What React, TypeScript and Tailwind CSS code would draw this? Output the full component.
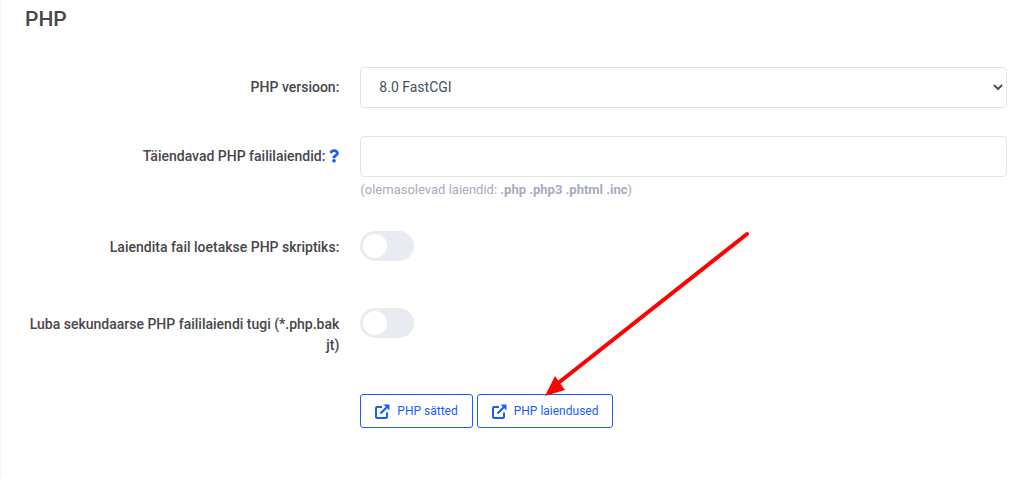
import { useId } from 'react';
import type { ReactNode } from 'react';
import { FaQuestion } from 'react-icons/fa';

function Row({ label, htmlFor, hint, children }: { label?: string; htmlFor?: string; hint?: ReactNode; children: ReactNode }) {
  return (
    <div className="grid grid-cols-[1fr_2fr] gap-x-5">
      <div className="pt-2.5 pr-px text-right text-sm leading-[21px] font-medium text-[#48464c]">
        {label && <label htmlFor={htmlFor}>{label}</label>}
        {hint}
      </div>
      <div>{children}</div>
    </div>
  );
}

function Toggle({ id }: { id: string }) {
  return (
    <span className="relative flex h-[30px] w-[54px] items-center rounded-full bg-[#e8ebf1] px-[3px] has-checked:bg-[#1a5cff]">
      <input id={id} type="checkbox" className="peer absolute inset-0 cursor-pointer appearance-none rounded-full" />
      <span className="pointer-events-none size-6 rounded-full bg-white transition-transform peer-checked:translate-x-6" />
    </span>
  );
}

function LinkButton({ children }: { children: ReactNode }) {
  return (
    <button type="button" className="flex h-[34px] items-center gap-[7px] rounded-[3px] border border-[#1a5cff] bg-white px-3.5 text-xs text-[#1a5cff]">
      <svg className="size-[15px]" viewBox="0 0 15 15" fill="none" stroke="currentColor" strokeWidth="2" strokeLinejoin="round">
        <path d="M7 3H2Q1 3 1 4V13Q1 14 2 14H11Q12 14 12 13V8.5" />
        <path d="M5.5 9.5L12 3" strokeWidth="2.2" />
        <path d="M8.5 0.5H14.5V6.5Z" fill="currentColor" stroke="none" />
      </svg>
      {children}
    </button>
  );
}

export default function App() {
  const id = useId();

  return (
    <main className="min-h-screen border-l border-[#f5f5f8] bg-white pr-1.5 pl-4 font-['Roboto',sans-serif]">
      <h3 className="px-2 pt-1 text-[21px] leading-[30px] font-medium text-[#48464c]">PHP</h3>

      <form className="pt-[33px]">
        <Row label="PHP versioon:" htmlFor={`${id}-version`}>
          <select id={`${id}-version`} className="block h-[41px] w-full rounded border border-[#e2e5ec] bg-white px-3.5 pb-0.5 text-sm text-[#495057]">
            <option>8.0 FastCGI</option>
          </select>
        </Row>

        <div className="pt-7">
          <Row
            label="Täiendavad PHP faililaiendid:"
            htmlFor={`${id}-ext`}
            hint={<FaQuestion className="ml-1 inline-block h-3.5 w-2.5 align-[-2px] text-[#1a5cff]" />}
          >
            <input id={`${id}-ext`} type="text" className="block h-[41px] w-full rounded border border-[#e2e5ec] px-4 text-sm text-[#495057]" />
            <p className="pt-[3px] text-[13px] leading-5 text-[#a7abc3]">
              (olemasolevad laiendid: <b>.php .php3 .phtml .inc</b>)
            </p>
          </Row>
        </div>

        <div className="pt-[27px]">
          <Row label="Laiendita fail loetakse PHP skriptiks:" htmlFor={`${id}-plain`}>
            <div className="pt-1">
              <Toggle id={`${id}-plain`} />
            </div>
          </Row>
        </div>

        <div className="pt-[43px]">
          <Row label="Luba sekundaarse PHP faililaiendi tugi (*.php.bak jt)" htmlFor={`${id}-second`}>
            <div className="pt-1">
              <Toggle id={`${id}-second`} />
            </div>
          </Row>
        </div>

        <div className="pt-[38px]">
          <Row>
            <div className="flex gap-1">
              <LinkButton>PHP sätted</LinkButton>
              <div className="relative">
                <LinkButton>PHP laiendused</LinkButton>
                <svg className="pointer-events-none absolute bottom-7 left-16 h-[172px] w-[210px]" viewBox="0 0 210 172" fill="none">
                  <path d="M206 6L16 156" stroke="#ff0000" strokeWidth="4" strokeLinecap="round" />
                  <path d="M4 168L14 148L24 162Z" fill="#ff0000" />
                </svg>
              </div>
            </div>
          </Row>
        </div>
      </form>
    </main>
  );
}
